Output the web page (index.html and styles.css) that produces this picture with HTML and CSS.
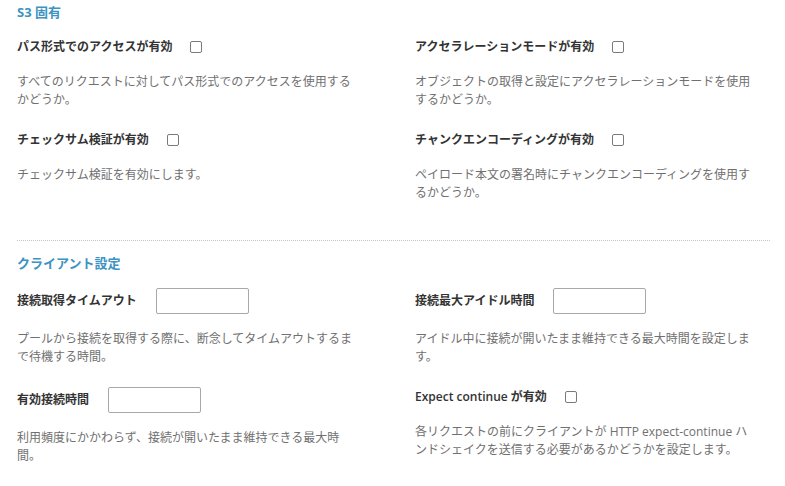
FILE: index.html
```html
<!DOCTYPE html>
<html lang="ja">
<head>
<meta charset="utf-8">
<link rel="stylesheet" href="styles.css">
</head>
<body>
<section class="section s3">
  <h2 class="section-title">S3 固有</h2>
  <div class="fields">
    <div class="field">
      <div class="field-row check-row">
        <label class="field-label">パス形式でのアクセスが有効</label>
        <input type="checkbox" class="check">
      </div>
      <p class="field-desc">すべてのリクエストに対してパス形式でのアクセスを使用するかどうか。</p>
    </div>
    <div class="field">
      <div class="field-row check-row">
        <label class="field-label">アクセラレーションモードが有効</label>
        <input type="checkbox" class="check">
      </div>
      <p class="field-desc">オブジェクトの取得と設定にアクセラレーションモードを使用するかどうか。</p>
    </div>
    <div class="field">
      <div class="field-row check-row">
        <label class="field-label">チェックサム検証が有効</label>
        <input type="checkbox" class="check">
      </div>
      <p class="field-desc">チェックサム検証を有効にします。</p>
    </div>
    <div class="field">
      <div class="field-row check-row">
        <label class="field-label">チャンクエンコーディングが有効</label>
        <input type="checkbox" class="check">
      </div>
      <p class="field-desc">ペイロード本文の署名時にチャンクエンコーディングを使用するかどうか。</p>
    </div>
  </div>
</section>
<hr class="divider">
<section class="section client">
  <h2 class="section-title">クライアント設定</h2>
  <div class="fields">
    <div class="field">
      <div class="field-row input-row">
        <label class="field-label">接続取得タイムアウト</label>
        <input type="text" class="text-input">
      </div>
      <p class="field-desc">プールから接続を取得する際に、断念してタイムアウトするまで待機する時間。</p>
    </div>
    <div class="field">
      <div class="field-row input-row">
        <label class="field-label">接続最大アイドル時間</label>
        <input type="text" class="text-input">
      </div>
      <p class="field-desc">アイドル中に接続が開いたまま維持できる最大時間を設定します。</p>
    </div>
    <div class="field">
      <div class="field-row input-row">
        <label class="field-label">有効接続時間</label>
        <input type="text" class="text-input">
      </div>
      <p class="field-desc">利用頻度にかかわらず、接続が開いたまま維持できる最大時間。</p>
    </div>
    <div class="field">
      <div class="field-row check-row">
        <label class="field-label"><span class="latin">Expect continue</span> が有効</label>
        <input type="checkbox" class="check">
      </div>
      <p class="field-desc">各リクエストの前にクライアントが HTTP expect-continue ハンドシェイクを送信する必要があるかどうかを設定します。</p>
    </div>
  </div>
</section>
</body>
</html>
```

FILE: styles.css
```css
html, body {
  background: #ffffff;
}
body {
  margin: 0;
  padding: 3px 15px 0 17px;
  font-family: "Open Sans", "Noto Sans CJK JP", sans-serif;
  font-size: 12px;
  color: #333333;
}
.section-title {
  margin: 0 0 16px;
  font-size: 13px;
  line-height: 18px;
  font-weight: 700;
  color: #3d93c2;
}
.fields {
  display: grid;
  grid-template-columns: 398px 1fr;
  row-gap: 21px;
  align-items: start;
}
.field-row {
  display: flex;
  align-items: center;
  gap: 18px;
}
.check-row {
  height: 20px;
}
.input-row {
  height: 26px;
  gap: 19px;
}
.field-label {
  font-weight: 700;
  font-size: 12px;
  line-height: 18px;
  color: #333333;
}
.latin {
  font-weight: 600;
  color: #333333;
}
.check {
  appearance: none;
  -webkit-appearance: none;
  margin: 0;
  width: 12px;
  height: 12px;
  border: 1px solid #7a7a7a;
  border-radius: 2px;
  background: #fff;
  box-sizing: border-box;
}
.text-input {
  margin: 0;
  width: 93px;
  height: 26px;
  box-sizing: border-box;
  border: 1px solid #a8a8a8;
  border-radius: 2px;
  background: #fff;
  padding: 0 6px;
}
.field-desc {
  margin: 16px 0 0;
  max-width: 342px;
  font-size: 12px;
  line-height: 18px;
  color: #707070;
}
.s3 {
  padding-bottom: 38px;
}
.divider {
  margin: 0 0 13px;
  border: 0;
  border-top: 1px dotted #c4c4c4;
  height: 0;
}
```
